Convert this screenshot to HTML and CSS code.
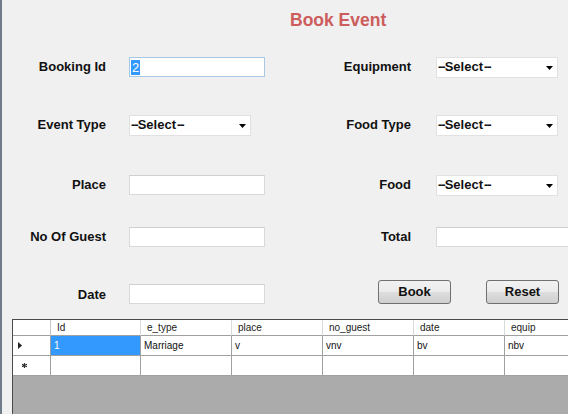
FILE: index.html
```html
<!DOCTYPE html>
<html>
<head>
<meta charset="utf-8">
<title>Book Event</title>
<link rel="stylesheet" href="styles.css">
</head>
<body>
<div class="window">
  <h1 class="title">Book Event</h1>

  <div class="row r1">
    <label class="lbl">Booking Id</label>
    <div class="ctl-left"><div class="input focused"><span class="hl">2</span></div></div>
    <label class="lbl">Equipment</label>
    <div class="ctl-right"><div class="combo"><span><span class="dash">--</span>Select<span class="dash">--</span></span><svg class="arrow" width="7" height="4" viewBox="0 0 7 4"><polygon points="0,0 7,0 3.5,4" fill="#000"/></svg></div></div>
  </div>

  <div class="row r2">
    <label class="lbl">Event Type</label>
    <div class="ctl-left"><div class="combo"><span><span class="dash">--</span>Select<span class="dash">--</span></span><svg class="arrow" width="7" height="4" viewBox="0 0 7 4"><polygon points="0,0 7,0 3.5,4" fill="#000"/></svg></div></div>
    <label class="lbl">Food Type</label>
    <div class="ctl-right"><div class="combo"><span><span class="dash">--</span>Select<span class="dash">--</span></span><svg class="arrow" width="7" height="4" viewBox="0 0 7 4"><polygon points="0,0 7,0 3.5,4" fill="#000"/></svg></div></div>
  </div>

  <div class="row r3">
    <label class="lbl">Place</label>
    <div class="ctl-left"><div class="input"></div></div>
    <label class="lbl">Food</label>
    <div class="ctl-right"><div class="combo"><span><span class="dash">--</span>Select<span class="dash">--</span></span><svg class="arrow" width="7" height="4" viewBox="0 0 7 4"><polygon points="0,0 7,0 3.5,4" fill="#000"/></svg></div></div>
  </div>

  <div class="row r4">
    <label class="lbl">No Of Guest</label>
    <div class="ctl-left"><div class="input"></div></div>
    <label class="lbl">Total</label>
    <div class="ctl-right"><div class="input"></div></div>
  </div>

  <div class="row r5">
    <label class="lbl low">Date</label>
    <div class="ctl-left low-ctl"><div class="input"></div></div>
    <div class="buttons">
      <button class="btn">Book</button>
      <button class="btn">Reset</button>
    </div>
  </div>

  <div class="grid">
    <div class="grow head">
      <div class="hc corner"></div>
      <div class="hc">Id</div>
      <div class="hc">e_type</div>
      <div class="hc">place</div>
      <div class="hc">no_guest</div>
      <div class="hc">date</div>
      <div class="hc">equip</div>
    </div>
    <div class="grow">
      <div class="rh"><svg width="4" height="7" viewBox="0 0 4 7"><polygon points="0,0 4,3.5 0,7" fill="#222"/></svg></div>
      <div class="c selected">1</div>
      <div class="c">Marriage</div>
      <div class="c">v</div>
      <div class="c">vnv</div>
      <div class="c">bv</div>
      <div class="c">nbv</div>
    </div>
    <div class="grow">
      <div class="rh newrow"><svg width="5" height="5" viewBox="0 0 5 5"><path d="M2.5 0V5M0 1.2L5 3.8M0 3.8L5 1.2" stroke="#333" stroke-width="1.2"/></svg></div>
      <div class="c"></div>
      <div class="c"></div>
      <div class="c"></div>
      <div class="c"></div>
      <div class="c"></div>
      <div class="c"></div>
    </div>
  </div>
</div>
</body>
</html>
```

FILE: styles.css
```css
* { box-sizing: border-box; }

html, body {
  margin: 0;
  padding: 0;
  background: #f0f0f0;
}

.window {
  width: 568px;
  height: 414px;
  overflow: hidden;
  background: #f0f0f0;
  border-left: 2px solid #6f7b88;
  font-family: "Liberation Sans", Arial, sans-serif;
  color: #000;
}

.title {
  margin: 0 0 0 288px;
  padding-top: 10px;
  height: 30px;
  font-size: 17.5px;
  line-height: 20px;
  font-weight: bold;
  color: #cd5c5c;
}

.row {
  display: grid;
  grid-template-columns: 104px 159px 146px 157px;
  height: 24px;
  align-items: center;
}

.r1 { margin-top: 25px; }
.r2 { margin-top: 34px; }
.r3 { margin-top: 36px; }
.r4 { margin-top: 28px; }
.r5 { margin-top: 30px; }

.lbl {
  font-size: 13px;
  font-weight: bold;
  text-align: right;
  white-space: nowrap;
  line-height: 16px;
  color: #111;
}

.lbl.low { padding-top: 6px; }
.low-ctl { padding-top: 5px; }

.ctl-left { padding-left: 23px; }
.ctl-right { padding-left: 25px; }

.input {
  width: 136px;
  height: 20px;
  background: #fff;
  border: 1px solid #d9d9d9;
  border-top-color: #cfcfcf;
  display: flex;
  align-items: center;
  padding-left: 1px;
}

.input.focused {
  border-color: #a9c6e4;
}

.hl {
  background: #3399ff;
  color: #fff;
  font-size: 13px;
  line-height: 15px;
  padding: 0 1px;
}

.combo {
  width: 122px;
  height: 21px;
  background: #fff;
  border: 1px solid #e1e1e1;
  display: flex;
  align-items: center;
  justify-content: space-between;
  padding: 0 4px 0 1px;
  font-size: 13px;
  font-weight: bold;
  line-height: 16px;
  color: #111;
}

.dash { letter-spacing: -1px; }
.dash + * { margin-left: 1px; }

.arrow { display: block; margin-top: 1px; }

.buttons {
  grid-column: 3 / 5;
  display: flex;
  gap: 35px;
  padding-left: 113px;
  height: 24px;
}

.btn {
  width: 73px;
  height: 24px;
  margin: 0;
  padding: 0;
  border: 1px solid #707070;
  border-radius: 3px;
  background: linear-gradient(#f2f2f2 0%, #ebebeb 48%, #dddddd 52%, #cfcfcf 100%);
  font-family: "Liberation Sans", Arial, sans-serif;
  font-size: 13px;
  font-weight: bold;
  color: #111;
}

.grid {
  margin: 16px 0 0 10px;
  height: 110px;
  background: #ababab;
  border: 1px solid #4a4a4a;
  border-right: none;
  overflow: hidden;
  font-size: 10px;
}

.grow {
  display: grid;
  grid-template-columns: 38px 90px 91px 91px 91px 91px 91px;
  height: 20px;
  width: 583px;
}

.grow.head { height: 16px; }

.hc {
  background: #fff;
  border-right: 1px solid #dadada;
  border-bottom: 1px solid #a0a0a0;
  padding-left: 6px;
  display: flex;
  align-items: center;
  color: #222;
  white-space: nowrap;
}

.hc.corner { border-right-color: #c8c8c8; }

.rh {
  background: #fff;
  border-right: 1px solid #a0a0a0;
  border-bottom: 1px solid #a0a0a0;
  display: flex;
  align-items: center;
  padding-left: 5px;
}

.rh.newrow { padding-left: 9px; }

.c {
  background: #fff;
  border-right: 1px solid #a0a0a0;
  border-bottom: 1px solid #a0a0a0;
  display: flex;
  align-items: center;
  padding-left: 3px;
  color: #111;
  white-space: nowrap;
}

.c.selected {
  background: #3399ff;
  color: #fff;
}
```
